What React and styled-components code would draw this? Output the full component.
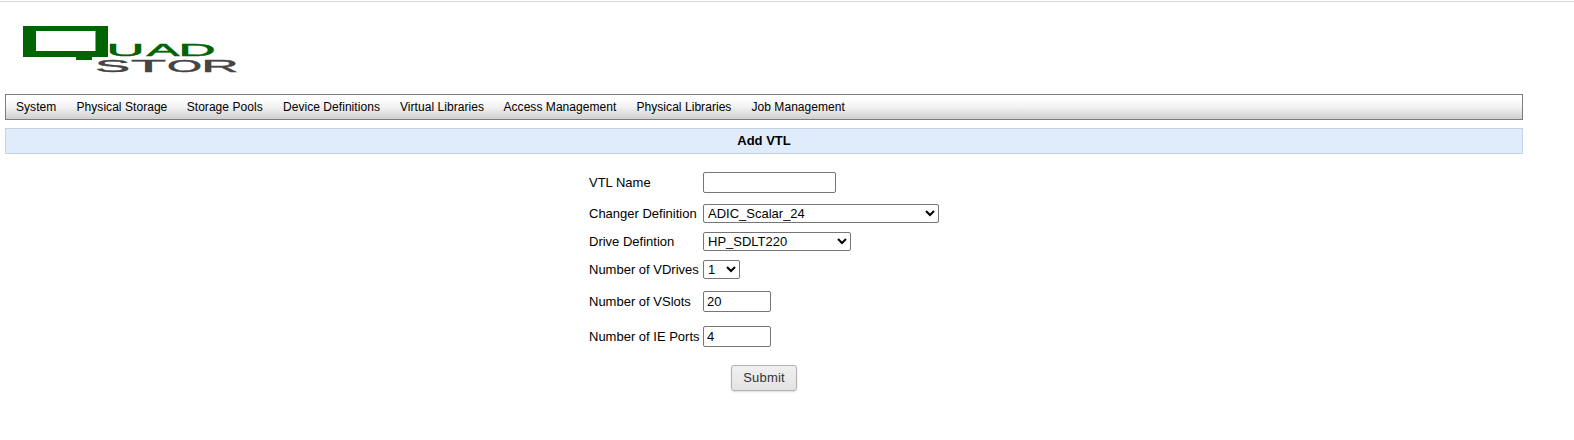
import React from 'react';
import styled, { createGlobalStyle } from 'styled-components';

const GlobalStyle = createGlobalStyle`
  body {
    margin: 0;
    background: #fff;
    color: #000;
    font-family: 'Liberation Sans', Arial, sans-serif;
    font-size: 13px;
  }
`;

const Page = styled.div`
  box-sizing: border-box;
  width: 1523px;
  height: 440px;
  padding-left: 5px;
`;

const TopRule = styled.div`
  height: 1px;
  width: 1574px;
  margin-left: -5px;
  border-top: 1px solid #fff;
  background: #dcdcdc;
`;

const Header = styled.header`
  height: 92px;
`;

const Logo = styled.svg`
  display: block;
  width: 250px;
  height: 92px;
  font-family: 'Liberation Sans', Arial, sans-serif;
`;

const Nav = styled.nav`
  box-sizing: border-box;
  display: flex;
  align-items: center;
  gap: 20px;
  height: 26px;
  padding: 0 10px;
  border: 1px solid #7c7c7c;
  background: linear-gradient(#fff 15%, #f2f2f2 50%, #cfcfcf);
`;

const NavItem = styled.a`
  width: ${(p) => p.$width}px;
  font-size: 12px;
  letter-spacing: 0.05px;
  line-height: 24px;
  white-space: nowrap;
`;

const Title = styled.h1`
  box-sizing: border-box;
  height: 26px;
  margin: 8px 0 11px;
  border: 1px solid #c2d5e8;
  background: #e0ecfb;
  font-size: 13px;
  line-height: 24px;
  text-align: center;
`;

const Form = styled.form`
  width: 350px;
  margin-left: 584px;
`;

const Row = styled.div`
  display: grid;
  grid-template-columns: 114px auto;
  justify-items: start;
  align-items: start;
  box-sizing: border-box;
  height: ${(p) => (p.$tall ? 35 : 28)}px;
  padding-top: ${(p) => (p.$tall ? 7 : 4)}px;
`;

const Label = styled.label`
  line-height: ${(p) => (p.$tall ? 21 : 19)}px;
  white-space: nowrap;
`;

const Input = styled.input`
  box-sizing: border-box;
  width: ${(p) => p.$width}px;
  height: 21px;
  margin: 0;
  padding: 1px 3px;
  border: 1px solid #767676;
  border-radius: 2px;
  background: #fff;
  color: #000;
  font: 13px 'Liberation Sans', Arial, sans-serif;
`;

const Select = styled.select`
  box-sizing: border-box;
  width: ${(p) => p.$width}px;
  height: 19px;
  margin: 0;
  border: 1px solid #767676;
  border-radius: 2px;
  background-color: #fff;
  color: #000;
  font: 13px 'Liberation Sans', Arial, sans-serif;
`;

const Actions = styled.div`
  display: flex;
  padding: 11px 0 0 142px;
`;

const Button = styled.button`
  box-sizing: border-box;
  width: 66px;
  height: 26px;
  margin: 0;
  padding: 0 0 1px;
  border: 1px solid #b2b2b2;
  border-radius: 3px;
  background: linear-gradient(#f0f0f0, #e3e3e3);
  box-shadow: 0 1px 2px rgba(0, 0, 0, 0.15);
  color: #333;
  font: 13px 'Liberation Sans', Arial, sans-serif;
  letter-spacing: 0.2px;
`;

const menu = [
  ['System', 40.5],
  ['Physical Storage', 90.2],
  ['Storage Pools', 76.3],
  ['Device Definitions', 97],
  ['Virtual Libraries', 83.5],
  ['Access Management', 113],
  ['Physical Libraries', 95],
  ['Job Management', 94],
];

const upper = [['U', 101.5, 38], ['A', 141.5, 33], ['D', 173.5, 37]];
const lower = [['S', 90, 35], ['T', 126, 35], ['O', 162, 35], ['R', 196.5, 37]];

function Wordmark({ letters, y, size, color }) {
  return letters.map(([ch, x, w]) => (
    <text
      key={ch}
      x={x}
      y={y}
      fontSize={size}
      fill={color}
      stroke={color}
      strokeWidth="0.45"
      textLength={w}
      lengthAdjust="spacingAndGlyphs"
    >
      {ch}
    </text>
  ));
}

function TextRow({ label, value, width }) {
  return (
    <Row $tall>
      <Label $tall>{label}</Label>
      <Input $width={width} defaultValue={value} aria-label={label} />
    </Row>
  );
}

function SelectRow({ label, value, width }) {
  return (
    <Row>
      <Label>{label}</Label>
      <Select $width={width} aria-label={label}>
        <option>{value}</option>
      </Select>
    </Row>
  );
}

export default function App() {
  return (
    <>
      <GlobalStyle />
      <Page>
        <TopRule />
        <Header>
          <Logo viewBox="0 2 250 92" role="img" aria-label="QUADStor">
            <path d="M18 26h85v31H18zM31 31v20h59.5V31z" fill="#006400" fillRule="evenodd" />
            <rect x="71" y="56" width="16" height="4" fill="#006400" />
            <Wordmark letters={upper} y={55.8} size={17} color="#006400" />
            <Wordmark letters={lower} y={72.3} size={16} color="#464446" />
          </Logo>
        </Header>
        <Nav>
          {menu.map(([name, width]) => (
            <NavItem key={name} $width={width}>{name}</NavItem>
          ))}
        </Nav>
        <Title>Add VTL</Title>
        <Form onSubmit={(e) => e.preventDefault()}>
          <TextRow label="VTL Name" value="" width={133} />
          <SelectRow label="Changer Definition" value="ADIC_Scalar_24" width={236} />
          <SelectRow label="Drive Defintion" value="HP_SDLT220" width={148} />
          <SelectRow label="Number of VDrives" value="1" width={37} />
          <TextRow label="Number of VSlots" value="20" width={68} />
          <TextRow label="Number of IE Ports" value="4" width={68} />
          <Actions>
            <Button type="submit">Submit</Button>
          </Actions>
        </Form>
      </Page>
    </>
  );
}
